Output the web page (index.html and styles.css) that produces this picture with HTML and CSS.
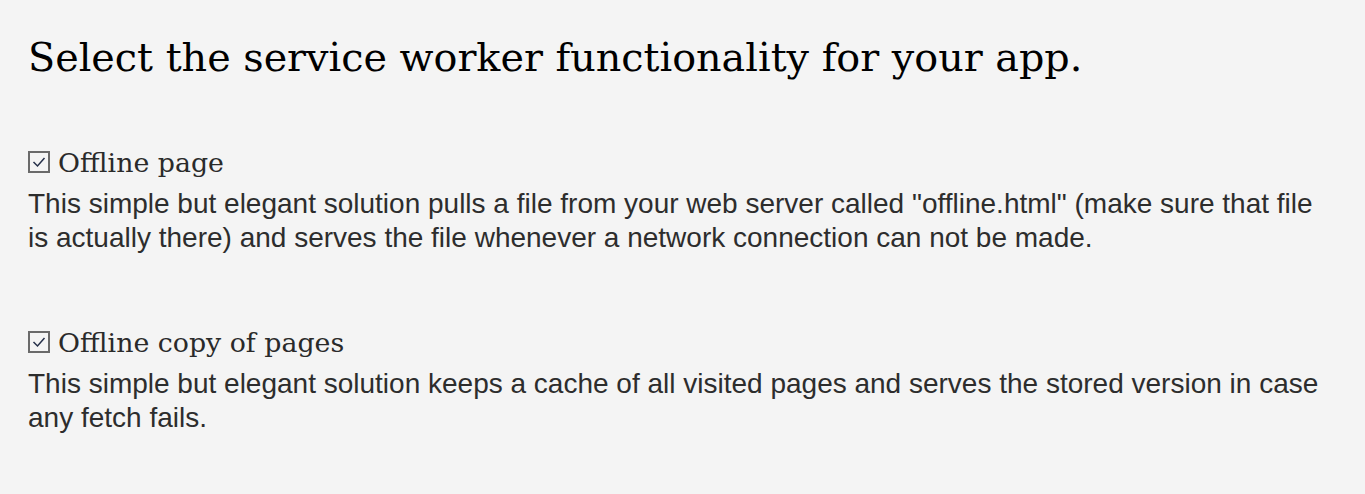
FILE: index.html
```html
<!DOCTYPE html>
<html lang="en">
<head>
<meta charset="utf-8">
<title>Service worker</title>
<link rel="stylesheet" href="styles.css">
</head>
<body>
<main class="page">
  <h1 class="title">Select the service worker functionality for your app.</h1>
  <section class="option">
    <h2 class="option-label"><svg class="check" width="22" height="22" viewBox="0 0 22 22"><rect x="1" y="1" width="20" height="20" fill="none" stroke="#6a6a6a" stroke-width="2"/><path d="M5.5 11 L9.5 15 L16.5 7" fill="none" stroke="#26304a" stroke-width="1.5"/></svg><span>Offline page</span></h2>
    <p class="option-desc">This simple but elegant solution pulls a file from your web server called "offline.html" (make sure that file is actually there) and serves the file whenever a network connection can not be made.</p>
  </section>
  <section class="option">
    <h2 class="option-label"><svg class="check" width="22" height="22" viewBox="0 0 22 22"><rect x="1" y="1" width="20" height="20" fill="none" stroke="#6a6a6a" stroke-width="2"/><path d="M5.5 11 L9.5 15 L16.5 7" fill="none" stroke="#26304a" stroke-width="1.5"/></svg><span>Offline copy of pages</span></h2>
    <p class="option-desc">This simple but elegant solution keeps a cache of all visited pages and serves the stored version in case any fetch fails.</p>
  </section>
</main>
</body>
</html>
```
FILE: styles.css
```css
html, body {
  margin: 0;
  padding: 0;
  background: #f4f4f4;
}
.page {
  padding: 27px 40px 0 28px;
}
.title {
  margin: 0 0 58px 0;
  font-family: "DejaVu Serif", "Liberation Serif", serif;
  font-weight: normal;
  font-size: 39.7px;
  line-height: 60px;
  color: #000;
}
.option {
  margin-bottom: 71px;
}
.option-label {
  margin: 0 0 6px 0;
  display: flex;
  align-items: center;
  gap: 8px;
  font-family: "DejaVu Serif", "Liberation Serif", serif;
  font-weight: normal;
  font-size: 26.8px;
  line-height: 36px;
  color: #2a2a2a;
}
.check {
  flex: none;
  margin-top: -2px;
}
.option-desc {
  margin: 0;
  font-family: "Liberation Sans", Arial, sans-serif;
  font-size: 28px;
  line-height: 33.5px;
  color: #2d2d2d;
}
```
